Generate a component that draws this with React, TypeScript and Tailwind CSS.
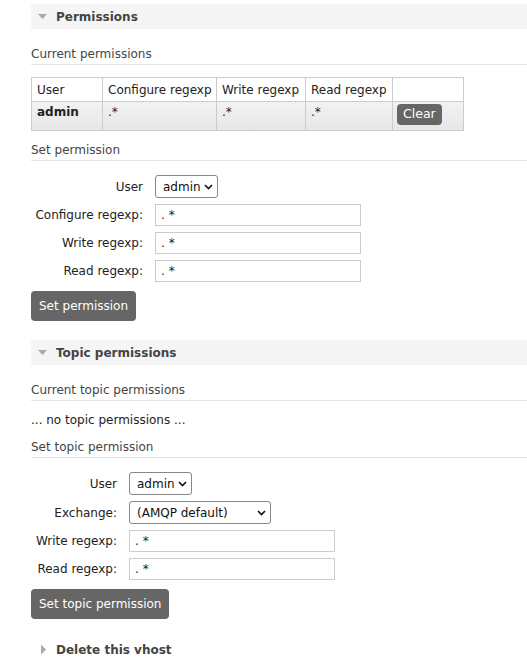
const COLS = ["User", "Configure regexp", "Write regexp", "Read regexp", ""]
const WIDTHS = ["w-[71px]", "w-[114px]", "w-[89px]", "w-[87px]", "w-[71px]"]

function SectionHeader({ title, open }: { title: string; open: boolean }) {
  return (
    <div className={open ? "flex h-[25px] items-center bg-[#f5f5f5] pl-[7px]" : "flex h-[25px] items-center pl-[7px]"}>
      {open ? (
        <svg width="18" height="8" viewBox="0 0 18 8">
          <path d="M0 1h9L4.5 6z" fill="#aaa" />
        </svg>
      ) : (
        <svg width="18" height="11" viewBox="0 0 18 11">
          <path d="M3 0.5v10l5-5z" fill="#aaa" />
        </svg>
      )}
      <span className="text-[12px] font-bold text-[#444]">{title}</span>
    </div>
  )
}

function SubHeading({ children }: { children: string }) {
  return (
    <div className="border-b border-[#e4e4e4] pb-[1px] text-[12px] leading-[18px] text-[#444]">{children}</div>
  )
}

function Field({ label, w, value }: { label: string; w: string; value: string }) {
  return (
    <div className="flex items-center">
      <span className={`${w} pr-[12px] text-right text-[12px] text-[#222]`}>{label}</span>
      <div className="flex h-[22px] w-[206px] items-center border border-[#ccc] bg-white pl-[5px] text-[12px] text-[#222]">
        {value}
      </div>
    </div>
  )
}

function Select({ label, w, value, width }: { label: string; w: string; value: string; width: string }) {
  return (
    <div className="flex items-center">
      <span className={`${w} pr-[12px] text-right text-[12px] text-[#222]`}>{label}</span>
      <div className={`${width} flex h-[23px] items-center justify-between rounded-[3px] border border-[#888] bg-white pl-[7px] pr-[4px] text-[12px] text-[#111]`}>
        <span>{value}</span>
        <svg width="9" height="6" viewBox="0 0 9 6">
          <path d="M1 1l3.5 3.5L8 1" fill="none" stroke="#111" strokeWidth="1.6" />
        </svg>
      </div>
    </div>
  )
}

function Button({ children }: { children: string }) {
  return (
    <div className="inline-flex h-[30px] items-center rounded-[4px] bg-[#666] px-[8px] text-[12px] text-white">
      {children}
    </div>
  )
}

export default function App() {
  return (
    <div className="min-h-[665px] bg-white pl-[31px] pt-[4px] font-['DejaVu_Sans',Verdana,sans-serif]">
      <SectionHeader title="Permissions" open />

      <div className="mt-[16px]">
        <SubHeading>Current permissions</SubHeading>
      </div>

      <table className="mt-[12px] w-[432px] table-fixed border-collapse text-[12px] text-[#222]">
        <thead>
          <tr className="h-[24px]">
            {COLS.map((c, i) => (
              <th
                key={i}
                className={WIDTHS[i] + " whitespace-nowrap border border-[#ccc] px-[5px] text-left font-normal"}
              >
                {c}
              </th>
            ))}
          </tr>
        </thead>
        <tbody>
          <tr className="h-[29px] bg-gradient-to-b from-[#f2f2f2] to-[#e6e6e6] align-top">
            <td className="border border-[#ccc] px-[5px] pt-[1px] font-bold">admin</td>
            <td className="border border-[#ccc] px-[5px] pt-[1px]">.*</td>
            <td className="border border-[#ccc] px-[5px] pt-[1px]">.*</td>
            <td className="border border-[#ccc] px-[5px] pt-[1px]">.*</td>
            <td className="border border-[#ccc] px-[4px] pt-[2px]">
              <span className="inline-flex h-[21px] items-center rounded-[4px] bg-[#666] px-[6px] text-[12.5px] text-white">
                Clear
              </span>
            </td>
          </tr>
        </tbody>
      </table>

      <div className="mt-[10px]">
        <SubHeading>Set permission</SubHeading>
      </div>

      <div className="mt-[14px] flex flex-col gap-[6px]">
        <Select label="User" w="w-[124px]" value="admin" width="w-[63px]" />
        <Field label="Configure regexp:" w="w-[124px]" value=". *" />
        <Field label="Write regexp:" w="w-[124px]" value=". *" />
        <Field label="Read regexp:" w="w-[124px]" value=". *" />
      </div>

      <div className="mt-[9px]">
        <Button>Set permission</Button>
      </div>

      <div className="mt-[19px]">
        <SectionHeader title="Topic permissions" open />
      </div>

      <div className="mt-[16px]">
        <SubHeading>Current topic permissions</SubHeading>
      </div>
      <div className="mt-[10px] text-[12px] leading-[18px] text-[#222]">... no topic permissions ...</div>
      <div className="mt-[9px]">
        <SubHeading>Set topic permission</SubHeading>
      </div>

      <div className="mt-[14px] flex flex-col gap-[6px]">
        <Select label="User" w="w-[98px]" value="admin" width="w-[63px]" />
        <Select label="Exchange:" w="w-[98px]" value="(AMQP default)" width="w-[142px]" />
        <Field label="Write regexp:" w="w-[98px]" value=". *" />
        <Field label="Read regexp:" w="w-[98px]" value=". *" />
      </div>

      <div className="mt-[9px]">
        <Button>Set topic permission</Button>
      </div>

      <div className="mt-[18px]">
        <SectionHeader title="Delete this vhost" open={false} />
      </div>
    </div>
  )
}
